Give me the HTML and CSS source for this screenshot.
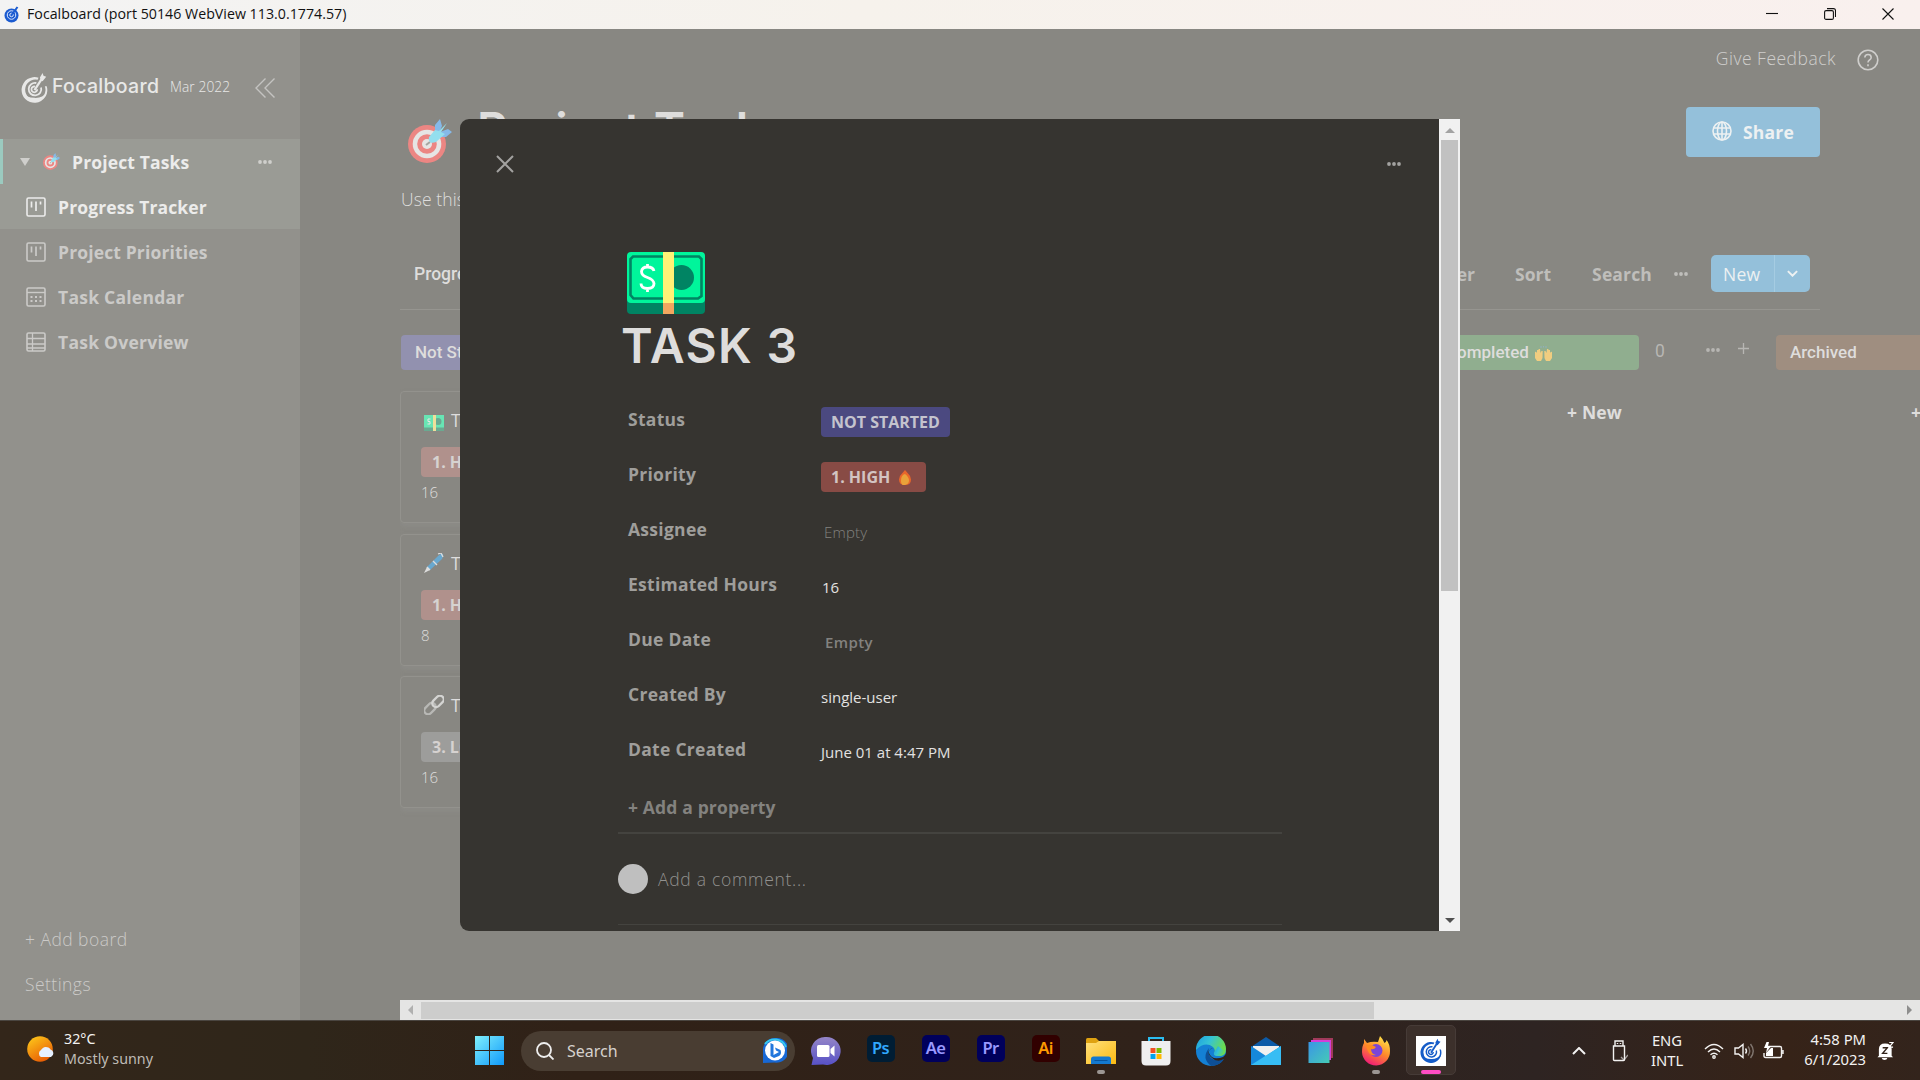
FILE: index.html
```html
<!DOCTYPE html>
<html lang="en">
<head>
<meta charset="utf-8">
<title>Focalboard</title>
<link rel="stylesheet" href="styles.css">
</head>
<body>
<svg class="defs" aria-hidden="true">
  <symbol id="dots" viewBox="0 0 14 4"><circle cx="2" cy="2" r="1.9"/><circle cx="7" cy="2" r="1.9"/><circle cx="12" cy="2" r="1.9"/></symbol>
  <symbol id="target" viewBox="0 0 44 44">
    <circle cx="19" cy="25" r="19" fill="#ec8683"/><circle cx="19" cy="25" r="14.3" fill="#e6e5e4"/><circle cx="19" cy="25" r="9.8" fill="#ec8683"/><circle cx="19" cy="25" r="5" fill="#e6e5e4"/>
    <path d="M18 26l4-3" stroke="#a5a5a0" stroke-width="2"/>
    <path d="M27 12V6l5-6 2 7-3 7zM32 13l8-3 4 3-6 5-7 0z" fill="#86b9e8"/>
    <path d="M27 11l4 1 8-8-6 9 4 2-9 8c-5 2-8 0-7-5z" fill="#93dfee"/>
  </symbol>
  <symbol id="money" viewBox="0 0 78 62">
    <path d="M0 44h78v14q0 4-4 4H4q-4 0-4-4z" fill="#008463"/>
    <rect width="78" height="51" rx="4" fill="#00f59b"/>
    <path d="M6 4.500H72L74.500 7V44L71 46.500H6.500L3.500 43V7z" fill="none" stroke="#008463" stroke-width="2.600"/>
    <circle cx="54.500" cy="25.500" r="12.500" fill="#008463"/>
    <path d="M36 0h11v51H36z" fill="#fff176"/><path d="M36 51h11v11H36z" fill="#f2a65f"/>
    <path d="M27 19q-1-4-6.500-4t-6 4.500q0 4 6 6t6.500 6q0 5-6.500 5t-6.500-5M20.500 12v4M20.500 36v4" fill="none" stroke="#fff" stroke-width="2.800"/>
  </symbol>
  <symbol id="board" viewBox="0 0 20 20"><rect x="1" y="1" width="18" height="18" rx="1.500" fill="none" stroke="currentColor" stroke-width="1.600"/><path d="M5.500 4.500v6M10 4.500v9.500M14.500 4.500v3" stroke="currentColor" stroke-width="1.700"/></symbol>
  <symbol id="logo" viewBox="0 0 30 34">
    <path d="M19.500 6.200A14.300 14.300 0 1 0 28.600 15.500L26.500 15.500A11.300 11.300 0 1 1 18.500 8.500z" fill="currentColor"/>
    <path d="M2 24A14.300 14.300 0 0 0 29 22Q24 29 15 28.500 6 28 2 24z" fill="currentColor"/>
    <path d="M17 12A7 7 0 1 0 22.300 17M15.500 16A3.200 3.200 0 1 0 18 19" fill="none" stroke="currentColor" stroke-width="2"/>
    <path d="M15 20L24 6" stroke="currentColor" stroke-width="2.500"/><path d="M21 6l3-5 1 3 3 1-4 5-2-1z" fill="currentColor"/>
  </symbol>
</svg>

<div class="titlebar">
  <svg class="tb-logo" viewBox="0 0 30 34"><circle cx="15" cy="19" r="14" fill="#1b5bd0"/><circle cx="15" cy="18" r="8.500" fill="none" stroke="#dce8ff" stroke-width="2"/><circle cx="15" cy="18" r="3.500" fill="none" stroke="#dce8ff" stroke-width="2"/><path d="M16 17L27 2" stroke="#1b5bd0" stroke-width="4"/></svg>
  <span class="tb-text">Focalboard (port 50146 WebView 113.0.1774.57)</span>
  <div class="winbtns">
    <svg viewBox="0 0 12 12"><path d="M0 5.500h12"/></svg>
    <svg viewBox="0 0 12 12"><rect x=".6" y="2.600" width="8.800" height="8.800" rx="1.500"/><path d="M3 .6h6.500q2 0 2 2V9"/></svg>
    <svg viewBox="0 0 12 12"><path d="M.5.5l11 11M11.500.5l-11 11"/></svg>
  </div>
</div>

<div class="app">
  <aside class="sidebar">
    <div class="brand">
      <svg class="brand-logo"><use href="#logo"/></svg>
      <span class="brand-name">Focalboard</span>
      <span class="brand-date">Mar 2022</span>
      <svg class="collapse" viewBox="0 0 20 20"><path d="M10.500.5L1 10l9.500 9.500M19.500.5L10 10l9.500 9.500"/></svg>
    </div>
    <div class="nav group active">
      <span class="tri"></span>
      <svg class="nav-target"><use href="#target"/></svg>
      <span>Project Tasks</span>
      <svg class="dots"><use href="#dots"/></svg>
    </div>
    <div class="nav active"><svg class="nav-ic"><use href="#board"/></svg><span>Progress Tracker</span></div>
    <div class="nav"><svg class="nav-ic"><use href="#board"/></svg><span>Project Priorities</span></div>
    <div class="nav"><svg class="nav-ic" viewBox="0 0 20 20"><rect x="1" y="1" width="18" height="18" rx="1.500" fill="none" stroke="currentColor" stroke-width="1.600"/><path d="M1 5.500h18" stroke="currentColor" stroke-width="1.400"/><path d="M4.500 10h11M4.500 14h11" stroke="currentColor" stroke-width="1.800" stroke-dasharray="2 2.500"/></svg><span class="wide">Task Calendar</span></div>
    <div class="nav"><svg class="nav-ic" viewBox="0 0 20 20"><rect x="1" y="1" width="18" height="18" rx="1.500" fill="none" stroke="currentColor" stroke-width="1.600"/><path d="M1 6.500h18M1 12h18M6.500 1v18M1 16h18" stroke="currentColor" stroke-width="1.300"/></svg><span class="wide">Task Overview</span></div>
    <div class="side-foot">
      <div>+ Add board</div>
      <div>Settings</div>
    </div>
  </aside>

  <main class="main">
    <div class="topbar">
      <span>Give Feedback</span>
      <svg class="help" viewBox="0 0 22 22"><circle cx="11" cy="11" r="9.800"/><path d="M7.800 8.500Q8 5.500 11 5.500t3.200 2.700Q14.200 10 12.500 11 11 12 11 13.500M11 15.200v2"/></svg>
    </div>
    <div class="title-row">
      <svg class="big-target"><use href="#target"/></svg>
      <h1>Project Tasks</h1>
      <div class="share">
        <svg viewBox="0 0 20 20"><circle cx="10" cy="10" r="9"/><ellipse cx="10" cy="10" rx="4.500" ry="9"/><path d="M10 1v18M1.500 7h17M1.500 13h17"/></svg>
        <span>Share</span>
      </div>
    </div>
    <div class="desc">Use this</div>
    <div class="toolbar">
      <span class="view">Progress Tracker</span>
      <span class="tool filter">Filter</span>
      <span class="tool sort">Sort</span>
      <span class="tool search">Search</span>
      <svg class="dots"><use href="#dots"/></svg>
      <div class="newbtn"><span>New</span><i><svg viewBox="0 0 10 6"><path d="M.8.800L5 5l4.200-4.200"/></svg></i></div>
    </div>
    <div class="columns">
      <section class="col">
        <div class="col-head"><span class="badge purple">Not Started</span></div>
        <article class="card"><div class="ct"><svg viewBox="0 0 20 16"><path d="M0 0h20v16H0z" fill="#6aa991"/><path d="M0 0h20v12.500H0z" fill="#68e5b4"/><circle cx="14" cy="6.500" r="3.500" fill="#6aa991"/><path d="M9 0h3v16H9z" fill="#eedf9b"/><path d="M6.500 4H4v2.500h2V9H3.500" fill="none" stroke="#e6e6e2"/></svg><span>TASK 3</span></div><b class="pill red">1. HIGH</b><p>16</p></article>
        <article class="card"><div class="ct"><svg class="sq" viewBox="0 0 20 20"><path d="M0 20l3-6 3 3z" fill="#ddd"/><path d="M3 14L14 3q3-3 5-2 1 2-1 5L6 17z" fill="#69a8cf"/><path d="M9 8l4 4M3 14l3 3M14 1l3-1 2 4" stroke="#ddd" fill="none" stroke-width="1.300"/></svg><span>TASK 2</span></div><b class="pill red">1. HIGH</b><p>8</p></article>
        <article class="card"><div class="ct"><svg class="sq" viewBox="0 0 20 20" fill="none" stroke-width="2.300"><rect x="-.5" y="9.800" width="13" height="7.600" rx="3.800" transform="rotate(-45 6 13.600)" stroke="#b8b8b5"/><rect x="7.500" y="2.600" width="13" height="7.600" rx="3.800" transform="rotate(-45 14 6.400)" stroke="#d4d4d2"/></svg><span>TASK 1</span></div><b class="pill gray">3. LOW</b><p>16</p></article>
      </section>
      <section class="col"></section>
      <section class="col"></section>
      <section class="col">
        <div class="col-head"><span class="badge green">Completed <svg viewBox="0 0 17 15"><path d="M0 6q1-1 2 1V4h1.300l.5-1H5l.5 4 1-2h1.200L7.500 12 6 15H2L0 12z" fill="#f0cd80"/><path d="M17 6q-1-1-2 1V4h-1.300l-.5-1H12l-.5 4-1-2H9.300L9.500 12l1.500 3h4l2-3z" fill="#f0cd80"/><path d="M6 0v2M8.500 0v1.500M11 0v2" stroke="#8fb0bd"/></svg></span><em>0</em><svg class="dots"><use href="#dots"/></svg><svg class="plus" viewBox="0 0 10 10"><path d="M5 0v10M0 5h10"/></svg></div>
        <div class="addnew">+ New</div>
      </section>
      <section class="col">
        <div class="col-head"><span class="badge brown">Archived</span></div>
        <div class="addnew">+ New</div>
      </section>
    </div>
    <div class="hscroll"><i class="left"></i><b></b><i class="right"></i></div>
  </main>
</div>

<div class="dialog">
  <div class="sheet">
    <div class="dlg-top">
      <svg class="close" viewBox="0 0 18 18"><path d="M1 1l16 16M17 1L1 17"/></svg>
      <svg class="dots"><use href="#dots"/></svg>
    </div>
    <div class="body">
      <svg class="money"><use href="#money"/></svg>
      <h2>TASK 3</h2>
      <dl>
        <dt>Status</dt><dd><b class="tag indigo">NOT STARTED</b></dd>
        <dt>Priority</dt><dd><b class="tag crimson">1. HIGH <svg viewBox="0 0 12 15"><path d="M6 0q2 2 3 3.500Q12 6 12 9.500 12 15 6 15T0 9.500Q0 6 3 3.500z" fill="#e8662b"/><path d="M6 4q4 3 4 6.500T6 15 2 10.500 6 4z" fill="#e9a23a"/></svg></b></dd>
        <dt>Assignee</dt><dd class="empty">Empty</dd>
        <dt>Estimated Hours</dt><dd class="num">16</dd>
        <dt>Due Date</dt><dd class="empty strong">Empty</dd>
        <dt>Created By</dt><dd>single-user</dd>
        <dt>Date Created</dt><dd>June 01 at 4:47 PM</dd>
      </dl>
      <div class="addprop">+ Add a property</div>
      <div class="comment"><i></i><span>Add a comment...</span></div>
    </div>
  </div>
  <div class="vscroll"><i class="up"></i><b></b><i class="down"></i></div>
</div>

<footer class="taskbar">
  <div class="weather">
    <svg viewBox="0 0 28 26"><defs><linearGradient id="sun" x1="0" y1="0" x2=".6" y2="1"><stop offset="0" stop-color="#ffcf1c"/><stop offset="1" stop-color="#e85d04"/></linearGradient></defs><circle cx="13" cy="13" r="12.800" fill="url(#sun)"/><path d="M14 21a4 4 0 0 1 0-7 5.500 5.500 0 0 1 9.500-.5 4 4 0 0 1 .5 7.500z" fill="#e6f0ff"/></svg>
    <div>32°C<br><span class="dim">Mostly sunny</span></div>
  </div>
  <svg class="start" viewBox="0 0 29 29"><defs><linearGradient id="win" x1="0" y1="0" x2="1" y2="1"><stop offset="0" stop-color="#7ff0fc"/><stop offset="1" stop-color="#1099fb"/></linearGradient></defs><path d="M0 0h14v14H0zM15 0h14v14H15zM0 15h14v14H0zM15 15h14v14H15z" fill="url(#win)"/></svg>
  <div class="searchbox">
    <svg class="mag" viewBox="0 0 18 18"><circle cx="8" cy="8" r="7"/><path d="M13 13l4.500 4.500"/></svg>
    <span>Search</span>
    <svg class="bing" viewBox="0 0 25 25"><path d="M12.500 0a12.400 12.400 0 1 1 0 24.500L1 25V12.500A12 12 0 0 1 12.500 0z" fill="#1768d5"/><path d="M3 6A12.400 12.400 0 0 1 24 9" stroke="#37c9ef" stroke-width="2" fill="none"/><circle cx="13" cy="12.500" r="10" fill="#fff"/><path d="M8.500 5l3 1.500V17l5.500-3-3-1.500-1-3 5.500 2.500q1.500 4-1.500 6L12 20l-3.500-2z" fill="#2277dc"/></svg>
  </div>
  <div class="apps">
    <div class="slot"><svg viewBox="0 0 30 30"><defs><linearGradient id="chat" x1="0" y1="0" x2="0" y2="1"><stop offset="0" stop-color="#9485c7"/><stop offset="1" stop-color="#5751c6"/></linearGradient></defs><path d="M15 1a14 14 0 1 1-3 27.500L.5 29 2 22A14 14 0 0 1 15 1z" fill="url(#chat)"/><rect x="6" y="9" width="12.500" height="12" rx="1.500" fill="#fff"/><path d="M19.500 13l4-3.500v11l-4-3.500z" fill="#fff"/></svg></div>
    <div class="slot"><b class="adobe ps">Ps</b></div>
    <div class="slot"><b class="adobe ae">Ae</b></div>
    <div class="slot"><b class="adobe pr">Pr</b></div>
    <div class="slot"><b class="adobe ai">Ai</b></div>
    <div class="slot run"><svg viewBox="0 0 30 30"><defs><linearGradient id="fold" x1="0" y1="0" x2="1" y2="1"><stop offset="0" stop-color="#ffe07c"/><stop offset="1" stop-color="#fbba12"/></linearGradient></defs><path d="M0 3.500Q0 2 1.500 2H10l3 3v6H0z" fill="#dfa211"/><path d="M0 7h10l3-2h17v23H0z" fill="url(#fold)"/><path d="M5 28v-5q0-2.500 2.500-2.500h15Q25 20.500 25 23v5z" fill="#1479cf"/><path d="M8.500 24.500h13" stroke="#07549d"/></svg></div>
    <div class="slot"><svg viewBox="0 0 30 30"><path d="M8 6V2h14v4" fill="none" stroke="#2bbdf0" stroke-width="2"/><path d="M.5 5h29v20q0 4.500-4.500 4.500H5Q.5 29.500.5 25z" fill="#efefef"/><path d="M9.500 12h5v5h-5z" fill="#f25022"/><path d="M15.500 12h5v5h-5z" fill="#7fba00"/><path d="M9.500 18h5v5h-5z" fill="#00a4ef"/><path d="M15.500 18h5v5h-5z" fill="#ffb900"/></svg></div>
    <div class="slot"><svg viewBox="0 0 30 30"><defs><linearGradient id="edge" x1="0" y1="0" x2="1" y2=".4"><stop offset="0" stop-color="#1b9de2"/><stop offset=".5" stop-color="#35c3d5"/><stop offset="1" stop-color="#6bdc4f"/></linearGradient></defs><circle cx="15" cy="15" r="15" fill="#1480d4"/><path d="M0 14A15 15 0 0 1 30 13q0 7-7 7-6 0-5-3 2-3-1-6Q9 5 0 14z" fill="url(#edge)"/><path d="M13 12q-8 10 2 18 9 0 13-7-8 3-13-1-4-5-2-10z" fill="#0d4f97"/><path d="M17 12q-5 1-4 5 3 8 14 4l3-3v5h-2q-7 4-12-1-5-4-3-8z" fill="#30221a"/><path d="M18 17q-1 3 5 3 5 0 6.500-4L22 10z" fill="url(#edge)"/></svg></div>
    <div class="slot"><svg viewBox="0 0 30 30"><path d="M0 11L15 1l15 10z" fill="#0c5ba8"/><path d="M2 10h26v12H2z" fill="#f0f0f0"/><path d="M0 10l15 10L30 10v19H0z" fill="#1688db"/><path d="M30 10L0 29h30z" fill="#37bdf4"/></svg></div>
    <div class="slot"><svg viewBox="0 0 30 30"><defs><linearGradient id="sq" x1="0" y1="0" x2="1" y2="1"><stop offset="0" stop-color="#3a95e6"/><stop offset="1" stop-color="#45cbb6"/></linearGradient></defs><path d="M7 2h20v20H7z" fill="#a03a5b"/><path d="M5 4h20v20H5z" fill="#d43ed8"/><path d="M2.500 6h21v21h-21z" fill="url(#sq)"/></svg></div>
    <div class="slot run"><svg viewBox="0 0 30 30"><defs><linearGradient id="fx" x1=".8" y1="0" x2=".3" y2="1"><stop offset="0" stop-color="#ffe84a"/><stop offset=".5" stop-color="#ff8a2a"/><stop offset="1" stop-color="#f0187a"/></linearGradient></defs><path d="M17 6l2-6q3 3 4.500 7 2-1 2-3 3.500 4 3.500 11a14 14 0 0 1-28 1Q1 10 3 7V3l3 4q5-2 11-1z" fill="url(#fx)"/><circle cx="15" cy="14.500" r="6.500" fill="#7b45d8"/><path d="M5 9q5-1 8 1l2 1q-2 3-5 2 0 5 5 6-8 2-10-10z" fill="#ff8b22"/></svg></div>
    <div class="slot cur"><span><svg viewBox="0 0 30 34"><use href="#logo"/></svg></span></div>
  </div>
  <div class="tray">
    <svg class="chev" viewBox="0 0 14 8"><path d="M1 7l6-6 6 6"/></svg>
    <svg class="usb" viewBox="0 0 16 22"><path d="M3 6V1h8v5M1.500 6h11v13.500q0 1-1 1h-9q-1 0-1-1zM5.500 3v1M8.500 3v1"/><path d="M9 17l3 3 4-5" opacity=".6"/></svg>
    <div class="lang">ENG<br>INTL</div>
    <svg class="wifi" viewBox="0 0 20 16"><path d="M1 6q9-9 18 0M4 9q6-6 12 0M6.500 11.800q3.500-3.300 7 0"/><circle cx="10" cy="14" r="1.200"/></svg>
    <svg class="vol" viewBox="0 0 20 16"><path d="M1 5h3.500L9 1.500v13L4.500 11H1z"/><path d="M11.500 5.500q2 2.500 0 5"/><path d="M14 3.500q3.500 4.500 0 9M16.500 1q5.500 7 0 14" opacity=".4"/></svg>
    <svg class="bat" viewBox="0 0 21 17"><path d="M5 4.500h12q1.500 0 1.500 1.500v8q0 1.500-1.500 1.500H2.500Q1 15.500 1 14v-3M20 8v4"/><path d="M3.500 0L1 6h3l-1 5 5-7H5l1-4z" fill="#fff" stroke="none"/><path d="M3 14v-3l5-5h2v8z" fill="#fff" stroke="none"/></svg>
    <div class="clock">4:58 PM<br>6/1/2023</div>
    <svg class="bell" viewBox="0 0 18 20"><path d="M2 15V8q0-6 6.500-6 7 0 7 6v7l1.500 1.500H.5zM5 17.500h6q-.5 2-3 2t-3-2z" fill="#fff"/><path d="M6 6.500h5l-5 6h5" fill="none" stroke="#33241b" stroke-width="1.500"/><path d="M13 1h4l-4 5h4" fill="none" stroke="#fff" stroke-width="1.300"/></svg>
  </div>
</footer>
</body>
</html>
```
FILE: styles.css
```css
* { box-sizing: border-box; }
body { margin: 0; width: 1920px; height: 1080px; overflow: hidden; display: flex; flex-direction: column; font-family: "Open Sans", sans-serif; font-size: 17.5px; color: #dedddc; position: relative; white-space: nowrap; }
h1, h2, p, dl, dd { margin: 0; font-weight: inherit; }
.defs { position: absolute; width: 0; height: 0; }
.dots { width: 14px; height: 4px; fill: currentColor; flex: none; }

.titlebar { height: 29px; flex: none; display: flex; align-items: center; background: linear-gradient(90deg, #f3f3f3, #f6f2ec 45%, #f9f0ee); color: #111; padding: 0 26px 0 4px; }
.tb-logo { width: 15px; height: 17px; margin-right: 8px; }
.tb-text { font-size: 14.2px; letter-spacing: .02px; padding-bottom: 2px; }
.winbtns { margin-left: auto; display: flex; gap: 46px; padding-bottom: 1px; }
.winbtns svg { width: 12px; height: 12px; fill: none; stroke: #111; stroke-width: 1.1; }

.app { flex: 1; display: flex; min-height: 0; }
.sidebar { width: 300px; flex: none; background: #92918c; display: flex; flex-direction: column; color: #cbcac8; }
.brand { height: 110px; display: flex; align-items: center; padding: 7px 25px 0 21px; color: #e8e8e7; }
.brand-logo { width: 27px; height: 31px; margin-right: 4px; }
.brand-name { font-family: Inter, sans-serif; font-weight: 500; font-size: 19.5px; letter-spacing: .3px; padding-bottom: 3px; width: 107px; }
.brand-date { font-size: 13.75px; font-weight: 300; letter-spacing: .1px; margin-left: 11px; padding-bottom: 2px; }
.collapse { width: 20px; height: 20px; margin-left: auto; fill: none; stroke: #c4c3c1; stroke-width: 1.4; }
.nav { height: 45px; flex: none; display: flex; align-items: center; padding-left: 26px; font-weight: 700; letter-spacing: .14px; }
.nav .wide { letter-spacing: .25px; }
.nav.active { background: #9a9b95; color: #ececeb; }
.nav.group { border-left: 3px solid #9bcabf; padding: 0 28px 0 17px; }
.nav.group .dots { margin-left: auto; color: #cfcfcc; }
.tri { border: 5px solid transparent; border-top: 8px solid #cfcfcc; border-bottom: 0; margin-right: 13px; }
.nav-target { width: 17px; height: 17px; margin-right: 12px; }
.nav-ic { width: 20px; height: 20px; margin-right: 12px; }
.side-foot { margin-top: auto; padding: 0 0 14px 25px; font-weight: 300; letter-spacing: .45px; }
.side-foot div { height: 45px; display: flex; align-items: center; }

.main { flex: 1; min-width: 0; background: #888782; display: flex; flex-direction: column; padding-left: 100px; overflow: hidden; }
.topbar { height: 60px; flex: none; display: flex; align-items: center; justify-content: flex-end; gap: 21px; padding-right: 41px; font-weight: 300; letter-spacing: .5px; color: #cfcecc; }
.topbar span { padding-bottom: 2px; }
.help { width: 22px; height: 22px; margin-top: 2px; fill: none; stroke: currentColor; stroke-width: 1.6; }
.title-row { height: 86px; flex: none; display: flex; align-items: flex-start; padding: 18px 100px 0 8px; }
.big-target { width: 44px; height: 44px; margin-top: 12px; }
h1 { font-family: Inter, sans-serif; font-weight: 600; font-size: 47.5px; line-height: 58px; margin-left: 25px; margin-top: -6px; letter-spacing: .3px; }
.share { margin-left: auto; width: 134px; height: 50px; background: #94c0da; border-radius: 4px; display: flex; align-items: center; gap: 11px; padding-left: 26px; font-weight: 700; letter-spacing: .2px; color: #edf1f2; }
.share svg { width: 20px; height: 20px; margin-bottom: 2px; fill: none; stroke: currentColor; stroke-width: 1.6; }
.desc { height: 48px; flex: none; line-height: 48px; font-weight: 300; padding-left: 1px; letter-spacing: .1px; }
.toolbar { height: 87px; flex: none; width: 1420px; border-bottom: 1px solid #969590; display: flex; align-items: center; padding: 32px 10px 17px 14px; color: #bfbebb; font-weight: 700; }
.view { font-family: Roboto, sans-serif; font-weight: 500; color: #dedddc; }
.tool.filter { margin-left: auto; }
.tool.sort { margin-left: 40px; }
.tool.search { margin-left: 41px; margin-right: 22px; letter-spacing: .15px; }
.newbtn { margin-left: 23px; width: 99px; height: 37px; border-radius: 5px; background: #94c0da; color: #edf1f2; font-weight: 400; display: flex; align-items: center; padding-left: 12px; letter-spacing: .3px; }
.newbtn i { margin-left: auto; width: 36px; height: 37px; border-left: 1px solid #a5cce2; display: flex; align-items: center; justify-content: center; }
.newbtn svg { width: 11px; height: 7px; fill: none; stroke: currentColor; stroke-width: 1.8; }
.columns { flex: 1; min-height: 0; display: flex; gap: 19px; padding-top: 25px; overflow: hidden; }
.col { width: 325px; flex: none; }
.col-head { height: 35px; display: flex; align-items: center; color: #b7b6b3; margin-bottom: 21px; }
.badge { height: 35px; width: 207px; border-radius: 4px; padding: 0 0 1px 14px; display: flex; align-items: center; font-family: Roboto, sans-serif; font-weight: 500; font-size: 17px; color: #dedddc; gap: 6px; }
.badge svg { width: 17px; height: 15px; margin-top: 3px; }
.purple { background: #9291af; margin-left: 1px; }
.green { background: #90ae8f; }
.brown { background: #9f8e80; }
.col-head em { font-style: normal; margin-left: 16px; padding-bottom: 3px; font-family: Roboto, sans-serif; }
.col-head > .dots { margin: 0 0 6px auto; }
.plus { width: 11px; height: 11px; stroke: currentColor; stroke-width: 1.2; margin: 0 8px 8px 18px; }
.addnew { text-align: center; font-weight: 700; line-height: 24px; margin-top: 30px; letter-spacing: .2px; }
.card { height: 132px; margin-bottom: 10.7px; border: 1px solid #93928d; border-radius: 4px; padding: 19px 0 0 20px; box-shadow: 0 3px 5px rgba(150,149,145,.35); }
.ct { display: flex; gap: 7px; height: 24px; align-items: flex-start; padding-left: 3px; line-height: 18px; }
.ct svg { width: 20px; height: 16px; margin-top: 4px; }
.ct svg.sq { height: 20px; margin-top: -1px; }
.pill { display: block; width: 110px; height: 30px; border-radius: 4px; margin-top: 12px; padding-left: 11px; line-height: 30px; font-size: 16px; font-weight: 700; color: #d6d2d0; }
.red { background: #b0918c; }
.gray { background: #9d9d9b; }
.card p { font-weight: 300; font-size: 15px; line-height: 31px; }
.hscroll { height: 20px; flex: none; background: #e5e5e4; display: flex; align-items: center; padding: 0 8px; }
.hscroll b { width: 953px; height: 17px; background: #cdcdcc; margin-left: 8px; }
.hscroll i { border: 5px solid transparent; }
.hscroll .left { border-right-color: #b0b0af; border-left: 0; }
.hscroll .right { border-left-color: #8e8e8d; border-right: 0; margin-left: auto; }

.dialog { position: absolute; left: 460px; top: 119px; width: 1000px; height: 812px; background: #363430; border-radius: 9px 0 0 9px; overflow: hidden; display: flex; }
.sheet { flex: 1; display: flex; flex-direction: column; }
.dlg-top { height: 89px; flex: none; display: flex; align-items: center; justify-content: space-between; padding: 0 38px 0 36px; color: #a3a2a0; }
.close { width: 18px; height: 18px; stroke: currentColor; stroke-width: 2; }
.body { padding: 44px 157px 0 158px; }
.money { width: 78px; height: 62px; display: block; margin-left: 9px; }
h2 { font-family: Inter, sans-serif; font-weight: 600; font-size: 48px; line-height: 62px; letter-spacing: 1.3px; margin-left: 3px; padding-top: 1px; height: 62px; }
dl { display: grid; grid-template-columns: 192px 1fr; grid-auto-rows: 55px; align-items: center; margin: 17px 0 0 11px; }
dt { color: #9f9e9b; font-weight: 700; letter-spacing: .28px; padding-bottom: 4px; margin-left: -1px; }
dd { font-size: 15px; padding-top: 3px; color: #e3e2e1; }
.tag { display: inline-flex; align-items: center; height: 30px; border-radius: 4px; padding: 0 10px; font-size: 16px; font-weight: 700; gap: 9px; }
.tag svg { width: 12px; height: 15px; margin-right: 5px; }
.indigo { background: #4b4980; color: #c4c3ce; }
.crimson { background: #884b45; color: #d3c4c2; }
.empty { color: #83827f; font-weight: 300; padding-left: 3px; letter-spacing: .2px; }
.strong { font-weight: 600; padding-left: 4px; letter-spacing: .4px; }
.num { padding-left: 1px; }
.addprop { height: 56px; padding: 2px 0 0 10px; line-height: 54px; letter-spacing: .15px; color: #83827f; font-weight: 700; border-bottom: 2px solid #44433f; }
.comment { height: 91px; border-bottom: 1px solid #44433f; display: flex; align-items: center; gap: 10px; font-weight: 300; letter-spacing: .7px; color: #92918f; }
.comment i { width: 30px; height: 30px; border-radius: 50%; background: #bfbfbf; }
.vscroll { width: 21px; background: #f1f1f1; display: flex; flex-direction: column; align-items: center; padding: 9px 0 8px; }
.vscroll b { width: 17px; height: 451px; background: #c1c1c1; margin-top: 7px; }
.vscroll i { border: 5px solid transparent; }
.vscroll .up { border-bottom-color: #a3a3a3; border-top: 0; }
.vscroll .down { border-top-color: #505050; border-bottom: 0; margin-top: auto; }

.taskbar { height: 60px; flex: none; border-top: 1px solid #4a4540; background: linear-gradient(90deg, #33261a, #2f261a 16%, #302117 30%, #30221a 60%, #2e2422 80%, #362318 93%, #33241c); display: flex; align-items: center; color: #f3f2f1; font-size: 14.8px; line-height: 20px; font-family: "Noto Sans", sans-serif; }
.weather { width: 475px; padding-left: 27px; display: flex; align-items: center; gap: 9px; font-size: 14.3px; }
.weather > div { padding-bottom: 3px; }
.weather svg { width: 28px; height: 26px; margin-bottom: 3px; }
.dim { color: #bfbbb6; }
.start { width: 29px; height: 29px; margin-right: 17px; }
.searchbox { width: 274px; height: 40px; border-radius: 20px; background: #493d32; display: flex; align-items: center; padding: 0 8px 0 15px; gap: 13px; color: #d6d2cd; font-size: 16px; }
.mag { width: 18px; height: 18px; fill: none; stroke: #eee; stroke-width: 1.8; }
.bing { width: 25px; height: 25px; margin-left: auto; }
.apps { display: flex; margin-left: 3px; }
.slot { width: 55px; height: 59px; display: flex; align-items: center; justify-content: center; position: relative; }
.slot > svg { width: 30px; height: 30px; }
.adobe { width: 28px; height: 27px; border-radius: 5px; text-align: center; font-size: 16.5px; line-height: 25px; letter-spacing: -.6px; margin-top: -4px; font-weight: 600; }
.ps { background: #001d34; color: #31a8ff; }
.ae, .pr { background: #00005b; color: #9999ff; }
.ai { background: #310000; color: #ff9a00; }
.run::after, .cur::after { content: ""; position: absolute; bottom: 6px; width: 8px; height: 4px; border-radius: 2px; background: #9c9693; }
.cur::after { width: 20px; background: #ff4dc4; }
.cur::before { content: ""; position: absolute; inset: 4px 2px 5px 3px; border-radius: 5px; background: #3c302b; border: 1px solid #463b37; }
.cur span { width: 30px; height: 30px; background: #fff; color: #155cc8; display: flex; align-items: center; justify-content: center; position: relative; }
.cur span svg { width: 22px; height: 25px; }
.tray { margin-left: auto; display: flex; align-items: center; padding-right: 26px; }
.tray svg { fill: none; stroke: #f3f2f1; stroke-width: 1.4; flex: none; }
.tray .chev { width: 14px; height: 8px; stroke-width: 2; margin-right: 26px; }
.usb { width: 16px; height: 22px; margin-right: 23px; }
.lang { width: 32px; text-align: center; margin-right: 21px; padding-bottom: 2px; }
.wifi { width: 20px; height: 16px; margin-right: 10px; }
.vol { width: 20px; height: 16px; margin-right: 9px; }
.bat { width: 21px; height: 17px; margin-right: 19px; }
.clock { width: 63px; text-align: right; margin-right: 11px; padding-bottom: 4px; }
.tray .bell { width: 17px; height: 20px; stroke: none; }
```
